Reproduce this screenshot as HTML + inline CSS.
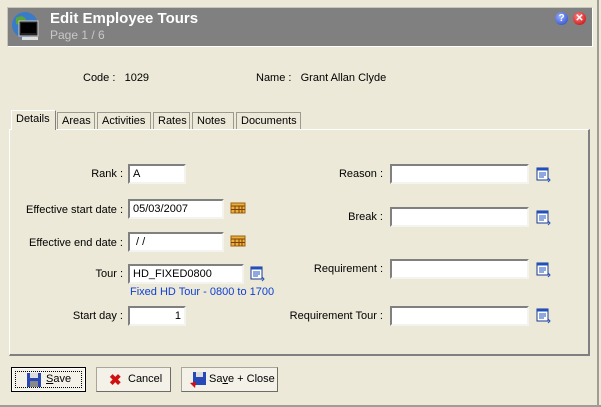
<!DOCTYPE html><html><head><style>
body{margin:0;width:601px;height:407px;background:#ECE9D8;font-family:"Liberation Sans",sans-serif;font-size:11px;color:#000;position:relative;overflow:hidden}
.a{position:absolute;white-space:nowrap}
.hdr{left:7px;top:7px;width:584px;height:38px;background:#808080;border:1px solid #fff;border-top-color:#c8c6bc;border-left-color:#c8c6bc}
.in{position:absolute;background:#fff;border:2px solid;border-color:#808080 #f4f3ee #f4f3ee #808080;box-sizing:border-box;height:20px;padding:2px 3px;font-size:11px;white-space:nowrap}
.lb{position:absolute;text-align:right;width:140px}
.tab{position:absolute;top:112px;height:17px;border:1px solid #9a9a8e;border-bottom:none;background:#ECE9D8;padding:2px 4px 0;box-sizing:border-box;font-size:11px;white-space:nowrap}
.btn{position:absolute;top:367px;height:25px;background:#f3f1e8;border:1px solid #a8a69a;border-right-color:#6e6c64;border-bottom-color:#6e6c64;box-sizing:border-box;font-size:11px;white-space:nowrap}
</style></head><body>
<div class="a" style="right:2px;top:0;width:2px;height:407px;background:#a09e94"></div>
<div class="a" style="left:0;bottom:0;width:601px;height:2px;background:#a09e94"></div>
<div class="a hdr"></div>
<svg class="a" style="left:10px;top:10px" width="34" height="34"><circle cx="15" cy="15" r="13" fill="#3a7bc8"/><path d="M6 8 Q12 4 16 9 Q12 16 6 14Z" fill="#5aa53a"/><path d="M20 20 Q26 18 27 24 Q22 28 18 25Z" fill="#c8a040"/><rect x="9" y="11" width="19" height="15" fill="#222" stroke="#ccc"/><rect x="11" y="13" width="15" height="10" fill="#000"/><rect x="12" y="27" width="16" height="3" fill="#ddd"/></svg>
<div class="a" style="left:50px;top:10px;color:#fff;font-size:15px;font-weight:bold">Edit Employee Tours</div>
<div class="a" style="left:50px;top:28px;color:#c8c8c8;font-size:12px">Page 1 / 6</div>
<div class="a" style="left:555px;top:12px;width:13px;height:13px;border-radius:50%;background:radial-gradient(circle at 40% 35%,#9ab0ff,#2040c0);color:#fff;font-weight:bold;font-size:10px;text-align:center;line-height:13px">?</div>
<div class="a" style="left:573px;top:12px;width:13px;height:13px;border-radius:50%;background:radial-gradient(circle at 40% 35%,#ff8080,#c00000);color:#fff;font-weight:bold;font-size:10px;text-align:center;line-height:13px">✕</div>
<div class="a" style="left:83px;top:72px">Code :&nbsp;&nbsp; 1029</div>
<div class="a" style="left:256px;top:72px">Name :&nbsp;&nbsp; Grant Allan Clyde</div>
<div class="a" style="left:9px;top:129px;width:578px;height:224px;border:1px solid #fff;border-right:2px solid #808080;border-bottom:2px solid #808080;border-left-color:#fff"></div>
<div class="tab" style="left:11px;top:110px;height:20px;width:45px;border-color:#fff #808080 #808080 #fff;z-index:2">Details</div>
<div class="tab" style="left:57px;width:38px">Areas</div>
<div class="tab" style="left:97px;width:54px">Activities</div>
<div class="tab" style="left:153px;width:37px">Rates</div>
<div class="tab" style="left:192px;width:42px">Notes</div>
<div class="tab" style="left:236px;width:65px">Documents</div>
<div class="lb" style="left:-17px;top:168px">Rank :</div><div class="in" style="left:128px;top:164px;width:58px">A</div>
<div class="lb" style="left:-17px;top:204px">Effective start date :</div><div class="in" style="left:128px;top:199px;width:96px">05/03/2007</div>
<div class="lb" style="left:-17px;top:237px">Effective end date :</div><div class="in" style="left:128px;top:232px;width:96px">&nbsp;/&nbsp;/</div>
<div class="lb" style="left:-17px;top:268px">Tour :</div><div class="in" style="left:128px;top:264px;width:116px">HD_FIXED0800</div>
<div class="a" style="left:130px;top:286px;color:#1040d0">Fixed HD Tour - 0800 to 1700</div>
<div class="lb" style="left:-17px;top:310px">Start day :</div><div class="in" style="left:128px;top:306px;width:58px;text-align:right">1</div>
<svg class="a" style="left:229px;top:200px" width="18" height="16"><rect x="2" y="3" width="14" height="10" fill="#e8b040" stroke="#a06010"/><path d="M2 6H16M6 6V13M10 6V13M13 6V13M2 9.5H16" stroke="#804000"/></svg>
<svg class="a" style="left:229px;top:233px" width="18" height="16"><rect x="2" y="3" width="14" height="10" fill="#e8b040" stroke="#a06010"/><path d="M2 6H16M6 6V13M10 6V13M13 6V13M2 9.5H16" stroke="#804000"/></svg>
<div class="lb" style="left:243px;top:168px">Reason :</div><div class="in" style="left:390px;top:164px;width:139px"></div>
<div class="lb" style="left:243px;top:211px">Break :</div><div class="in" style="left:390px;top:207px;width:139px"></div>
<div class="lb" style="left:243px;top:263px">Requirement :</div><div class="in" style="left:390px;top:259px;width:139px"></div>
<div class="lb" style="left:243px;top:310px">Requirement Tour :</div><div class="in" style="left:390px;top:306px;width:139px"></div>
<svg width="0" height="0" style="position:absolute"><defs><g id="li"><rect x="3" y="3" width="11" height="12" fill="#fff" stroke="#1a3a90"/><rect x="3" y="3" width="11" height="2.5" fill="#2050c0"/><path d="M5 8H12M5 10H12M5 12H10M14 13L16 15L14 17" stroke="#2050c0" fill="none"/></g></defs></svg>
<svg class="a" style="left:248px;top:264px" width="19" height="19"><use href="#li"/></svg>
<svg class="a" style="left:534px;top:165px" width="19" height="19"><use href="#li"/></svg>
<svg class="a" style="left:534px;top:208px" width="19" height="19"><use href="#li"/></svg>
<svg class="a" style="left:534px;top:260px" width="19" height="19"><use href="#li"/></svg>
<svg class="a" style="left:534px;top:306px" width="19" height="19"><use href="#li"/></svg>
<div class="btn" style="left:11px;width:75px;border:1px solid #000;box-shadow:inset 0 0 0 1px #fff"><div class="a" style="left:3px;top:3px;right:3px;bottom:3px;border:1px dotted #000"></div><svg class="a" style="left:14px;top:4px" width="16" height="16"><rect x="1" y="1" width="14" height="14" fill="#2848b8"/><rect x="4" y="1" width="8" height="5" fill="#ddd"/><rect x="4" y="9" width="8" height="6" fill="#888"/></svg><span class="a" style="left:34px;top:5px"><u>S</u>ave</span></div>
<div class="btn" style="left:96px;width:75px"><span class="a" style="left:12px;top:3px;color:#d01010;font-weight:bold;font-size:15px">✖</span><span class="a" style="left:31px;top:5px">Cancel</span></div>
<div class="btn" style="left:181px;width:97px"><svg class="a" style="left:7px;top:3px" width="18" height="18"><rect x="4" y="1" width="13" height="13" fill="#2848b8"/><rect x="7" y="1" width="7" height="5" fill="#ddd"/><path d="M1 12L6 17L7 11Z" fill="#d01010"/></svg><span class="a" style="left:27px;top:5px">Sa<u>v</u>e + Close</span></div>
</body></html>
